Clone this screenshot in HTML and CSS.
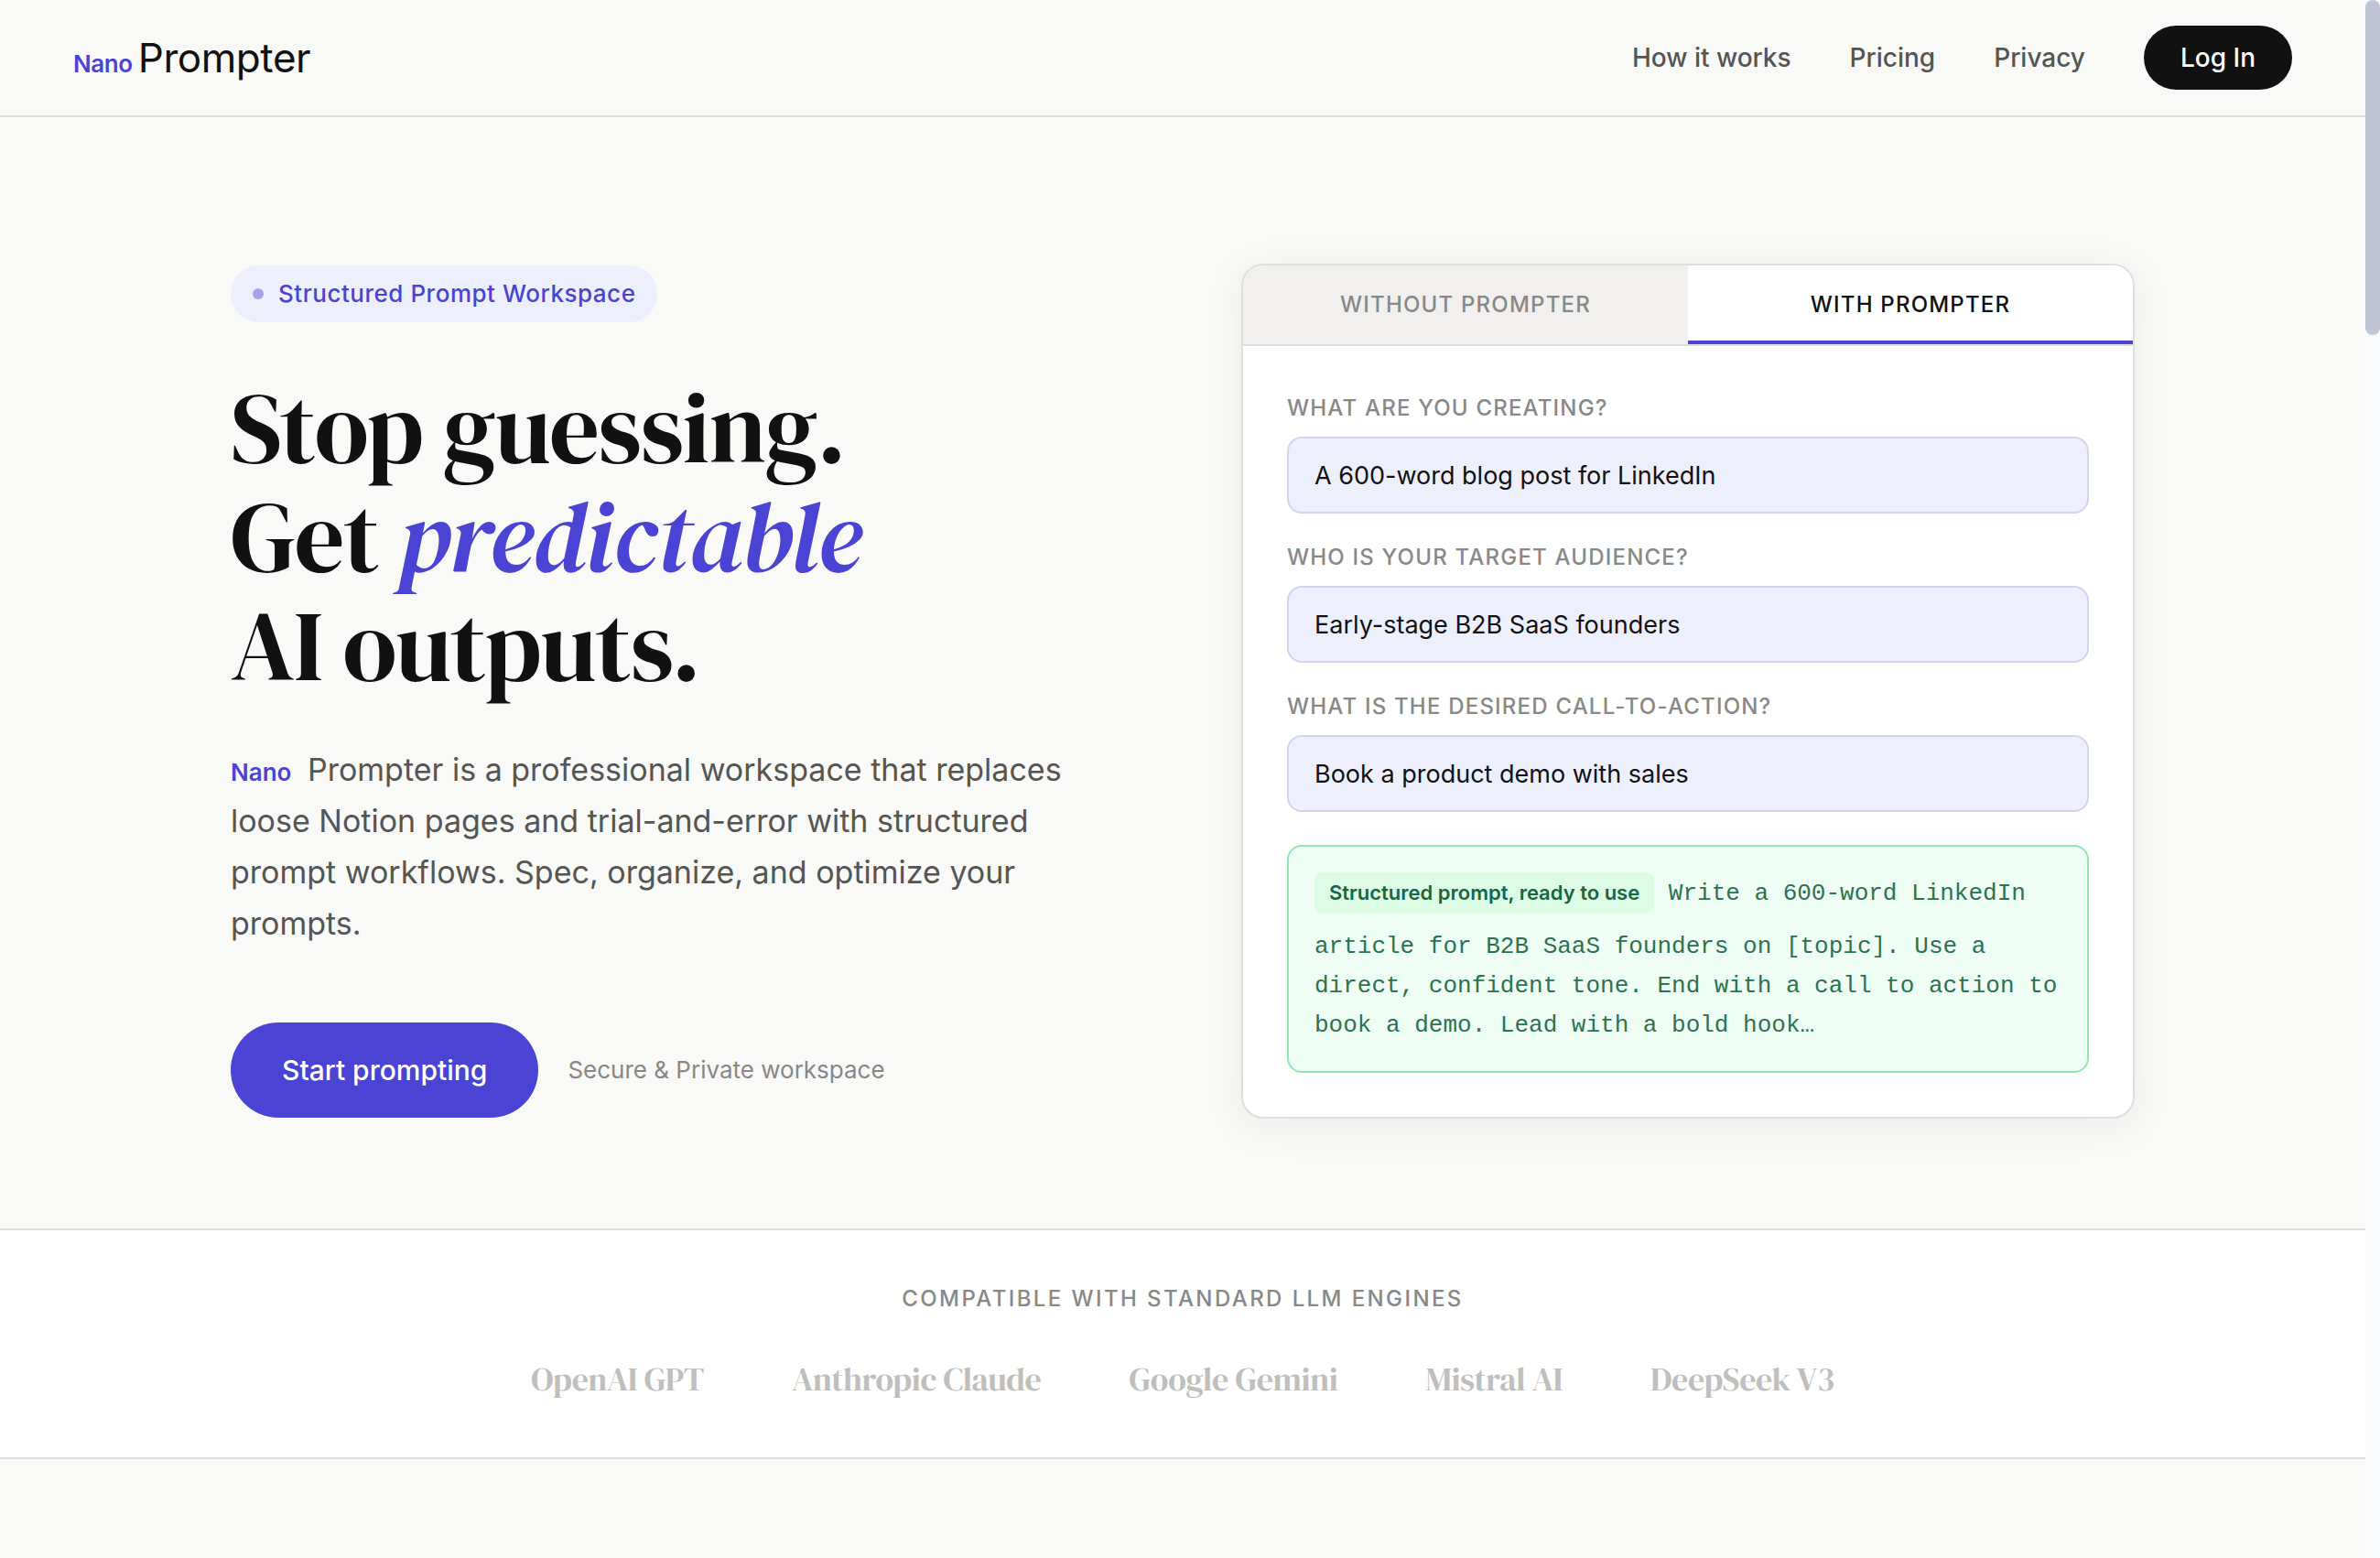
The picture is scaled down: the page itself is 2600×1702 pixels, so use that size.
FILE: index.html
```
<!DOCTYPE html>
<html lang="en">
<head>
    <meta charset="UTF-8">
    <meta name="viewport" content="width=device-width, initial-scale=1.0">
    <title>Nano Prompter - Structured Prompt Workspace</title>
    <link rel="stylesheet" href="styles.css">
</head>
<body>
    <header class="navbar">
        <a href="#" class="logo"><span class="nano">Nano </span>Prompter</a>
        <nav class="nav-links">
            <a href="#how">How it works</a>
            <a href="#pricing">Pricing</a>
            <a href="#privacy">Privacy</a>
            <a href="#login" class="btn-login">Log In</a>
        </nav>
    </header>

    <main>
        <section class="hero">
            <div class="hero-copy">
                <div class="badge"><span class="badge-dot"></span>Structured Prompt Workspace</div>
                <h1>Stop guessing.<br>Get <em>predictable</em><br>AI outputs.</h1>
                <p class="hero-sub"><span class="nano">Nano</span> Prompter is a professional workspace that replaces loose Notion pages and trial-and-error with structured prompt workflows. Spec, organize, and optimize your prompts.</p>
                <div class="hero-actions">
                    <button type="button" class="btn-primary">Start prompting</button>
                    <span class="hero-note">Secure &amp; Private workspace</span>
                </div>
            </div>

            <div class="demo">
                <div class="demo-tabs" role="tablist">
                    <button type="button" class="tab" role="tab" aria-selected="false">WITHOUT PROMPTER</button>
                    <button type="button" class="tab active" role="tab" aria-selected="true">WITH PROMPTER</button>
                </div>
                <form class="demo-body">
                    <div class="field">
                        <label for="creating">WHAT ARE YOU CREATING?</label>
                        <input type="text" id="creating" value="A 600-word blog post for LinkedIn">
                    </div>
                    <div class="field">
                        <label for="audience">WHO IS YOUR TARGET AUDIENCE?</label>
                        <input type="text" id="audience" value="Early-stage B2B SaaS founders">
                    </div>
                    <div class="field">
                        <label for="cta">WHAT IS THE DESIRED CALL-TO-ACTION?</label>
                        <input type="text" id="cta" value="Book a product demo with sales">
                    </div>
                    <div class="output"><span class="output-tag">Structured prompt, ready to use</span> Write a 600-word LinkedIn article for B2B SaaS founders on [topic]. Use a direct, confident tone. End with a call to action to book a demo. Lead with a bold hook…</div>
                </form>
            </div>
        </section>

        <section class="engines">
            <h2>COMPATIBLE WITH STANDARD LLM ENGINES</h2>
            <ul>
                <li>OpenAI GPT</li>
                <li>Anthropic Claude</li>
                <li>Google Gemini</li>
                <li>Mistral AI</li>
                <li>DeepSeek V3</li>
            </ul>
        </section>
    </main>

    <div class="scrollbar"><div class="scrollbar-thumb"></div></div>
</body>
</html>
```

FILE: styles.css
```
:root {
    --bg: #f9f9f7;
    --ink: #111111;
    --text: #555553;
    --muted: #888886;
    --line: #dfdfdb;
    --accent: #4a43d3;
    --accent-soft: #eeeffd;
    --serif: "DM Serif Display", "Liberation Serif", serif;
    --sans: Inter, sans-serif;
    --mono: "Courier New", "Liberation Mono", monospace;
}
* {
    margin: 0;
    padding: 0;
    box-sizing: border-box;
}
body {
    min-height: 100vh;
    padding-right: 16px;
    background: var(--bg);
    color: var(--ink);
    font-family: var(--sans);
}
a {
    color: inherit;
    text-decoration: none;
}
button, input {
    font-family: inherit;
    border: none;
}
button {
    cursor: pointer;
}

/* Navbar */
.navbar {
    display: flex;
    align-items: center;
    justify-content: space-between;
    padding: 28px 80px;
    border-bottom: 2px solid var(--line);
}
.logo {
    font-size: 44px;
    line-height: 70px;
    letter-spacing: -0.01em;
}
.nano {
    color: var(--accent);
    font-size: 26px;
    font-weight: 600;
    line-height: 1;
}
.nav-links {
    display: flex;
    align-items: center;
    gap: 64px;
    color: var(--text);
    font-size: 28px;
    font-weight: 500;
}
.btn-login {
    padding: 0 40px;
    border-radius: 100px;
    background: var(--ink);
    color: white;
    line-height: 70px;
}

/* Hero */
.hero {
    display: grid;
    grid-template-columns: 1fr 1fr;
    gap: 128px;
    align-items: center;
    max-width: 2240px;
    margin: 0 auto;
    padding: 160px 80px 120px;
}
.badge {
    display: inline-flex;
    align-items: center;
    gap: 16px;
    padding: 0 24px;
    border-radius: 100px;
    background: var(--accent-soft);
    color: var(--accent);
    font-size: 26px;
    font-weight: 500;
    line-height: 62px;
    letter-spacing: 0.02em;
}
.badge-dot {
    width: 12px;
    height: 12px;
    border-radius: 50%;
    background: #a7a2e9;
}
h1 {
    margin: 56px 0 48px;
    font-family: var(--serif);
    font-size: 108px;
    font-weight: 400;
    line-height: 119px;
    letter-spacing: -0.01em;
}
h1 em {
    color: var(--accent);
}
.hero-sub {
    max-width: 920px;
    margin-bottom: 80px;
    color: var(--text);
    font-size: 34px;
    line-height: 56px;
}
.hero-sub .nano {
    margin-right: 8px;
}
.hero-actions {
    display: flex;
    align-items: center;
    gap: 32px;
}
.btn-primary {
    padding: 0 56px;
    border-radius: 100px;
    background: var(--accent);
    color: white;
    font-size: 30px;
    font-weight: 500;
    line-height: 104px;
}
.hero-note {
    color: var(--muted);
    font-size: 26px;
}

/* Demo card */
.demo {
    overflow: hidden;
    border: 2px solid var(--line);
    border-radius: 24px;
    background: white;
    box-shadow: 0 8px 48px rgba(0, 0, 0, 0.06);
}
.demo-tabs {
    display: grid;
    grid-template-columns: 1fr 1fr;
    border-bottom: 2px solid var(--line);
}
.tab {
    padding: 28px 0 24px;
    border-bottom: 4px solid transparent;
    background: #f1f0ee;
    color: var(--muted);
    font-size: 24px;
    font-weight: 500;
    line-height: 30px;
    letter-spacing: 0.05em;
}
.tab.active {
    border-bottom-color: var(--accent);
    background: white;
    color: var(--ink);
}
.demo-body {
    padding: 48px;
}
.field {
    margin-bottom: 28px;
}
.field label {
    display: block;
    margin-bottom: 12px;
    color: var(--muted);
    font-size: 24px;
    font-weight: 500;
    line-height: 39px;
    letter-spacing: 0.05em;
}
.field input {
    display: block;
    width: 100%;
    height: 84px;
    padding: 0 28px;
    border: 2px solid #d5d2f2;
    border-radius: 16px;
    background: var(--accent-soft);
    color: var(--ink);
    font-size: 27px;
}
.output {
    margin-top: 36px;
    padding: 28px;
    border: 2px solid #92e6b2;
    border-radius: 16px;
    background: #effef4;
    color: #2b7350;
    font-family: var(--mono);
    font-size: 26px;
    line-height: 43px;
}
.output-tag {
    display: inline-block;
    margin-bottom: 16px;
    padding: 0 16px;
    border-radius: 8px;
    background: #dcfce6;
    color: #1a6640;
    font-family: var(--sans);
    font-size: 22px;
    font-weight: 600;
    line-height: 44px;
}

/* Engines */
.engines {
    padding: 56px 80px;
    border-top: 2px solid var(--line);
    border-bottom: 2px solid var(--line);
    background: white;
    text-align: center;
}
.engines h2 {
    margin-bottom: 40px;
    color: var(--muted);
    font-size: 24px;
    font-weight: 500;
    line-height: 38px;
    letter-spacing: 0.1em;
}
.engines ul {
    display: flex;
    flex-wrap: wrap;
    justify-content: center;
    gap: 96px;
    list-style: none;
    color: #bfbfbd;
    font-family: var(--serif);
    font-size: 36px;
    font-weight: 400;
    line-height: 58px;
    letter-spacing: -0.01em;
}

/* Scrollbar */
.scrollbar {
    position: fixed;
    top: 0;
    right: 0;
    bottom: 0;
    width: 16px;
    background: #f9fbfd;
}
.scrollbar-thumb {
    height: 366px;
    border-radius: 8px;
    background: #c2c5d6;
}
```
